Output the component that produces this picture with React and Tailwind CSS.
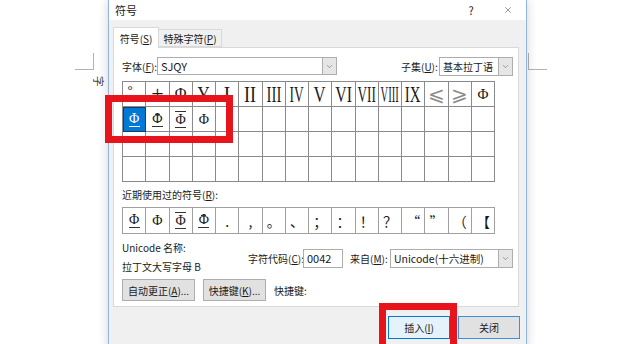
import React from "react";
import { ChevronDown, X } from "lucide-react";

const cjk = { fontFamily: '"Noto Sans CJK SC", "Noto Sans", sans-serif' };

// first row of the symbol grid
const row1 = [
  { t: "°", cls: "text-[13px] self-start mt-[1px] mr-[8px]" },
  { t: "+", cls: "text-[22px] font-light" },
  { t: "Φ", cls: "text-[16px]" },
  { t: "Y", cls: "text-[24px] scale-x-[0.7]" },
  { t: "I", cls: "text-[24px] scale-x-[0.8]" },
  { t: "II", cls: "text-[24px] scale-x-[0.75]" },
  { t: "III", cls: "text-[24px] scale-x-[0.62]" },
  { t: "IV", cls: "text-[24px] scale-x-[0.56]" },
  { t: "V", cls: "text-[24px] scale-x-[0.7]" },
  { t: "VI", cls: "text-[24px] scale-x-[0.66]" },
  { t: "VII", cls: "text-[24px] scale-x-[0.55]" },
  { t: "VIII", cls: "text-[24px] scale-x-[0.44]" },
  { t: "IX", cls: "text-[24px] scale-x-[0.62]" },
  { t: "⩽", cls: "text-[20px] text-[#8a8a8a]" },
  { t: "⩾", cls: "text-[20px] text-[#8a8a8a]" },
  { t: "Φ", cls: "text-[15px]" },
];

function Rebar({ kind, white }) {
  const line = white ? "bg-white" : "bg-[#333]";
  return (
    <span className="relative inline-flex flex-col items-center leading-none">
      {kind === "top" && <span className={`h-[1px] w-[11px] mb-[1px] ${line}`} />}
      <span
        className="text-[14px] leading-[13px]"
        style={{ fontFamily: '"Liberation Serif", serif' }}
      >
        Φ
      </span>
      {kind === "double" && (
        <>
          <span className={`absolute top-[2px] h-[1px] w-[5px] ${line}`} />
          <span className={`absolute top-[9px] h-[1px] w-[5px] ${line}`} />
        </>
      )}
      {(kind === "under" || kind === "top" || kind === "double") && (
        <span className={`h-[1px] w-[11px] mt-[1px] ${line}`} />
      )}
    </span>
  );
}

const recent = [
  <Rebar kind="under" />,
  <Rebar kind="plain" />,
  <Rebar kind="top" />,
  <Rebar kind="double" />,
  ".",
  ",",
  "。",
  "、",
  "；",
  "：",
  "！",
  "？",
  "“",
  "”",
  "（",
  "【",
];

function Label({ text, k, after = "):" }) {
  return (
    <span className="whitespace-nowrap">
      {text}(<u>{k}</u>
      {after}
    </span>
  );
}

function Select({ width, size = "text-[10.5px]", children }) {
  return (
    <div
      className={`flex h-[19px] shrink-0 items-center border border-[#adadad] bg-white ${width}`}
    >
      <span className={`flex-1 overflow-hidden whitespace-nowrap pl-[3px] ${size}`}>
        {children}
      </span>
      <span className="flex h-full w-[14px] shrink-0 items-center justify-center border-l border-[#adadad] bg-[#e6e6e6]">
        <ChevronDown size={9} strokeWidth={1.5} color="#666" />
      </span>
    </div>
  );
}

function Btn({ className = "", children }) {
  return (
    <div
      className={`flex h-[22px] shrink-0 items-center justify-center border border-[#adadad] bg-[#e1e1e1] ${className}`}
    >
      {children}
    </div>
  );
}

export default function App() {
  return (
    <div
      className="relative h-[344px] w-[620px] overflow-hidden bg-white text-[10px] text-[#1a1a1a]"
      style={cjk}
    >
      {/* page corner marks of the document behind */}
      <div className="absolute left-[75px] top-[53px] h-[17px] w-[19px] border-b border-r border-[#b4b4b4]" />
      <div className="absolute left-[528px] top-[53px] h-[17px] w-[19px] border-b border-l border-[#b4b4b4]" />
      <div className="absolute left-[93px] top-[73px] rotate-90 text-[11px] text-[#444]">字</div>

      {/* dialog window */}
      <div className="absolute left-[108px] top-0 flex h-[352px] w-[419px] flex-col border-x border-[#8db6e2] bg-[#f0f0f0] shadow-[0_0_10px_rgba(0,0,0,0.18)]">
        <div className="flex h-[20px] items-center bg-white pl-[6px] text-[11px]">
          <span>符号</span>
          <div className="ml-auto flex items-center pr-[13px]">
            <span className="w-[10px] text-center text-[11px]">?</span>
            <span className="ml-[27px] flex w-[10px] justify-center">
              <X size={12} strokeWidth={1.2} color="#333" />
            </span>
          </div>
        </div>

        {/* tabs */}
        <div className="flex items-end pl-[4px] pt-[7px]">
          <div className="relative z-10 -mb-px flex h-[21px] w-[46px] items-center justify-center border border-b-0 border-[#d9d9d9] bg-white">
            <Label text="符号" k="S" after=")" />
          </div>
          <div className="flex h-[18px] w-[63px] items-center justify-center border border-l-0 border-[#d9d9d9] bg-[#f0f0f0]">
            <Label text="特殊字符" k="P" after=")" />
          </div>
        </div>

        {/* tab panel */}
        <div className="ml-[4px] mr-[7px] flex h-[260px] flex-col border border-[#d9d9d9] bg-white pl-[8px] pt-[9px]">
          <div className="flex h-[18px] items-center">
            <span className="w-[35px] shrink-0">
              <Label text="字体" k="F" />
            </span>
            <div className="flex h-[18px] w-[180px] shrink-0 items-center border border-[#adadad]">
              <span className="flex-1 pl-[3px] text-[11px]">SJQY</span>
              <span className="flex h-full w-[14px] items-center justify-center border-l border-[#adadad] bg-[#e6e6e6]">
                <ChevronDown size={9} strokeWidth={1.5} color="#666" />
              </span>
            </div>
            <span className="ml-[64px] w-[38px] shrink-0">
              <Label text="子集" k="U" />
            </span>
            <Select width="w-[74px]" size="text-[10px]">
              基本拉丁语
            </Select>
          </div>

          {/* symbol grid */}
          <div
            className="mt-[6px] grid w-[373px] grid-cols-16 border-l border-t border-[#8a8a8a]"
            style={{ fontFamily: '"Liberation Serif", serif' }}
          >
            {row1.map((c, i) => (
              <div
                key={i}
                className="flex h-[25px] items-center justify-center overflow-hidden border-b border-r border-[#8a8a8a] leading-none"
              >
                <span className={`inline-block ${c.cls}`}>{c.t}</span>
              </div>
            ))}
            {Array.from({ length: 48 }).map((_, i) => {
              const sel = i === 0;
              const glyph = ["under", "double", "top", "plain"][i];
              return (
                <div
                  key={"c" + i}
                  className={`flex h-[25px] items-center justify-center border-b border-r border-[#8a8a8a] ${
                    sel ? "bg-[#0078d7] text-white outline outline-1 -outline-offset-1 outline-[#1d3b5a]" : ""
                  }`}
                >
                  {i < 4 && <Rebar kind={glyph} white={sel} />}
                </div>
              );
            })}
          </div>

          <div className="mt-[6px] h-[14px] leading-[14px]">
            <Label text="近期使用过的符号" k="R" />
          </div>
          <div className="mt-[5px] grid w-[373px] grid-cols-16 border-l border-t border-[#a0a0a0]">
            {recent.map((g, i) => (
              <div
                key={i}
                className="flex h-[26px] items-center justify-center border-b border-r border-[#a0a0a0] text-[14px] leading-none"
              >
                {g}
              </div>
            ))}
          </div>

          {/* unicode info */}
          <div className="mt-[6px] flex">
            <div className="w-[126px] shrink-0">
              <div className="h-[16px] leading-[16px]">Unicode 名称:</div>
              <div className="mt-[3px] h-[16px] leading-[16px]">拉丁文大写字母 B</div>
            </div>
            <div className="mt-[9px] flex h-[19px] items-center">
              <span className="w-[55px] shrink-0">
                <Label text="字符代码" k="C" />
              </span>
              <div className="flex h-[19px] w-[40px] shrink-0 items-center border border-[#adadad] pl-[3px] text-[11px]">
                0042
              </div>
              <span className="ml-[7px] w-[40px] shrink-0">
                <Label text="来自" k="M" />
              </span>
              <Select width="w-[123px]">Unicode(十六进制)</Select>
            </div>
          </div>

          <div className="mt-[4px] flex items-center">
            <Btn className="w-[73px]">
              <Label text="自动更正" k="A" after=")..." />
            </Btn>
            <Btn className="ml-[8px] w-[63px]">
              <Label text="快捷键" k="K" after=")..." />
            </Btn>
            <span className="ml-[8px]">快捷键:</span>
          </div>
        </div>

        {/* dialog buttons */}
        <div className="mt-[9px] flex justify-end gap-[8px] pr-[6px]">
          <div className="flex h-[23px] w-[62px] items-center justify-center border border-[#0078d7] bg-[#e5f1fb]">
            <Label text="插入" k="I" after=")" />
          </div>
          <div className="flex h-[23px] w-[62px] items-center justify-center border border-[#3c8ee0] bg-[#e1e1e1]">
            关闭
          </div>
        </div>
      </div>

      {/* red highlight marks */}
      <div className="absolute left-[105px] top-[95px] h-[48px] w-[128px] border-[7px] border-[#e8141c]" />
      <div className="absolute left-[379px] top-[303px] h-[50px] w-[78px] border-[7px] border-[#e8141c]" />
    </div>
  );
}
